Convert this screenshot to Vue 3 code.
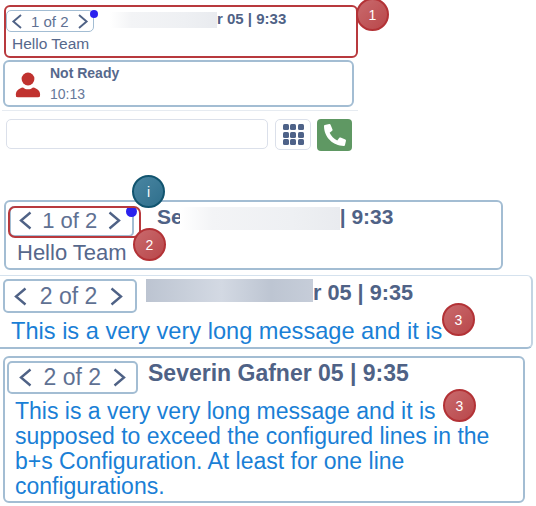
<script setup>
const longMessage = [
  'This is a very very long message and it is',
  'supposed to exceed the configured lines in the',
  'b+s Configuration. At least for one line',
  'configurations.'
]
const keys = 9
</script>

<template>
  <div class="page">
    <!-- small widget -->
    <section class="card small first">
      <div class="head">
        <div class="nav">
          <svg class="chev" viewBox="0 0 15 21"><path d="M12.500 2.500 3 10.500l9.500 8" /></svg>
          <span>1 of 2</span>
          <svg class="chev" viewBox="0 0 15 21"><path d="M2.500 2.500l9.500 8-9.500 8" /></svg>
          <i class="dot"></i>
        </div>
        <div class="title">
          <span class="blur pale"></span>
          <span>r 05 | 9:33</span>
        </div>
      </div>
      <p class="msg">Hello Team</p>
      <b class="badge red one">1</b>
    </section>

    <section class="card status">
      <svg class="person" viewBox="0 0 26 26">
        <circle cx="13" cy="7" r="6.400" />
        <path d="M1 24c-1-5 3-8 7-8.600 1.500 1.300 3 1.900 5 1.900s3.500-.6 5-1.900c4 .6 8 3.600 7 8.600-.2.8-.8 1.200-1.600 1.200H2.600C1.800 25.200 1.200 24.800 1 24z" />
      </svg>
      <div class="status-text">
        <strong>Not Ready</strong>
        <span>10:13</span>
      </div>
    </section>

    <div class="divider"></div>

    <div class="dial">
      <input class="number" />
      <button class="keypad">
        <span v-for="k in keys" :key="k"></span>
      </button>
      <button class="call">
        <svg viewBox="0 0 512 512">
          <path transform="matrix(-1 0 0 1 512 0)" d="M493.400 24.600l-104-24c-11.300-2.600-22.900 3.300-27.500 13.900l-48 112c-4.200 9.800-1.400 21.300 6.900 28l60.600 49.600c-36 76.700-98.900 140.500-177.200 177.200l-49.600-60.600c-6.800-8.300-18.200-11.100-28-6.900l-112 48C3.900 366.500-2 378.100.6 389.400l24 104C27.100 504.200 36.700 512 48 512c256.100 0 464-207.500 464-464 0-11.200-7.700-20.900-18.600-23.400z" />
        </svg>
      </button>
    </div>

    <!-- enlarged details -->
    <section class="card large third">
      <div class="head">
        <div class="nav">
          <svg class="chev" viewBox="0 0 15 21"><path d="M12.500 2.500 3 10.500l9.500 8" /></svg>
          <span>1 of 2</span>
          <svg class="chev" viewBox="0 0 15 21"><path d="M2.500 2.500l9.500 8-9.500 8" /></svg>
          <i class="dot"></i>
          <i class="mark"></i>
        </div>
        <div class="title">
          <span>Se</span>
          <span class="blur pale"></span>
          <span>| 9:33</span>
        </div>
      </div>
      <p class="msg">Hello Team</p>
      <b class="badge blue info">i</b>
      <b class="badge red two">2</b>
    </section>

    <section class="card large fourth">
      <div class="head">
        <div class="nav">
          <svg class="chev" viewBox="0 0 15 21"><path d="M12.500 2.500 3 10.500l9.500 8" /></svg>
          <span>2 of 2</span>
          <svg class="chev" viewBox="0 0 15 21"><path d="M2.500 2.500l9.500 8-9.500 8" /></svg>
        </div>
        <div class="title">
          <span class="blur dark"></span>
          <span>r 05 | 9:35</span>
        </div>
      </div>
      <p class="msg link">{{ longMessage[0] }}</p>
      <b class="badge red three-a">3</b>
    </section>

    <section class="card large fifth">
      <div class="head">
        <div class="nav">
          <svg class="chev" viewBox="0 0 15 21"><path d="M12.500 2.500 3 10.500l9.500 8" /></svg>
          <span>2 of 2</span>
          <svg class="chev" viewBox="0 0 15 21"><path d="M2.500 2.500l9.500 8-9.500 8" /></svg>
        </div>
        <div class="title">
          <span>Severin Gafner 05 | 9:35</span>
        </div>
      </div>
      <p class="msg link">
        <span v-for="line in longMessage" :key="line" class="line">{{ line }}</span>
      </p>
      <b class="badge red three-b">3</b>
    </section>
  </div>
</template>

<style scoped>
.page {
  width: 536px;
  height: 506px;
  overflow: hidden;
  font-family: "Liberation Sans", Arial, sans-serif;
  color: #56688c;
  background: #fff;
}

.page > :first-child {
  margin-top: 5px;
}

p {
  margin: 0;
}

.card {
  position: relative;
  box-sizing: border-box;
  border: 2px solid #a3bdd3;
  border-radius: 6px;
  background: #fff;
}

.head {
  display: flex;
  align-items: flex-start;
}

.nav {
  position: relative;
  box-sizing: border-box;
  display: flex;
  flex: none;
  align-items: center;
  justify-content: space-between;
  border: 2px solid #a3bdd3;
  border-radius: 5px;
  color: #5f7193;
}

.chev {
  flex: none;
  fill: none;
  stroke: #4f6286;
  stroke-width: 2.400;
}

.dot {
  position: absolute;
  border-radius: 50%;
  background: #2b22ee;
}

.title {
  display: flex;
  align-items: flex-start;
  font-weight: 700;
  white-space: nowrap;
  color: #4f6286;
}

.blur {
  display: block;
}

.blur.pale {
  background: linear-gradient(90deg, #fff 0, #f3f4f6 20%, #eef0f3 70%, #e9ebef 100%);
}

.blur.dark {
  background: linear-gradient(90deg, #bcc4d1, #d3d9e3 45%, #bdc5d2 75%, #c6cdd9);
}

/* small widget */
.small {
  margin-left: 4px;
}

.first {
  width: 354px;
  height: 53px;
  padding-top: 3px;
  border-color: #b8393d;
}

.first .nav {
  width: 88px;
  height: 22px;
  padding: 0 4.500px 0 4px;
  border-width: 1.500px;
  font-size: 15px;
}

.first .chev {
  width: 12px;
  height: 17px;
}

.first .dot {
  top: -1.500px;
  right: -4.500px;
  width: 8px;
  height: 8px;
}

.first .title {
  margin-left: 16px;
  font-size: 15px;
  line-height: 17px;
}

.first .blur {
  width: 107px;
  height: 16px;
  margin-top: 2px;
}

.first .msg {
  margin: 3px 0 0 6px;
  font-size: 15.500px;
  line-height: 18px;
}

.status {
  display: flex;
  width: 351px;
  height: 47px;
  margin: 2px 0 0 3px;
  padding: 3px 0 0 10px;
  font-size: 14px;
}

.person {
  width: 26px;
  height: 26px;
  margin-top: 7px;
  fill: #c0322f;
}

.status-text {
  display: flex;
  flex-direction: column;
  gap: 5px;
  margin-left: 9px;
}

.status-text span {
  color: #66789a;
}

.divider {
  width: 356px;
  height: 1px;
  margin: 3px 0 0 2px;
  background: #e6ebf1;
}

.dial {
  display: flex;
  align-items: flex-start;
  margin: 8px 0 0 6px;
}

.number {
  box-sizing: border-box;
  width: 262px;
  height: 30px;
  padding: 0;
  border: 1.500px solid #dbe0ea;
  border-radius: 5px;
  background: #fff;
}

.keypad {
  box-sizing: border-box;
  display: grid;
  grid-template-columns: repeat(3, 6px);
  grid-auto-rows: 6px;
  gap: 1.500px;
  place-content: center;
  width: 36px;
  height: 31px;
  margin-left: 7px;
  padding: 0;
  border: 1.500px solid #dbe0ea;
  border-radius: 5px;
  background: #fff;
}

.keypad span {
  border-radius: 1.500px;
  background: #4e6288;
}

.call {
  display: flex;
  align-items: center;
  justify-content: center;
  width: 35px;
  height: 32px;
  margin-left: 6px;
  padding: 0;
  border: 0;
  border-radius: 4px;
  background: #5f9863;
}

.call svg {
  width: 22px;
  height: 22px;
  fill: #fff;
}

/* enlarged */
.large .chev {
  width: 15px;
  height: 21px;
}

.large .msg {
  line-height: 25px;
}

.link {
  color: #1a7fd6;
}

.line {
  display: block;
}

.third {
  width: 499px;
  height: 70px;
  margin: 49px 0 0 4px;
  padding: 4px 0 0 3px;
}

.third .nav {
  width: 125px;
  height: 31px;
  padding: 0 10px 2px 6.500px;
  font-size: 22px;
}

.third .dot {
  top: -2px;
  right: -5px;
  width: 11px;
  height: 11px;
}

.mark {
  position: absolute;
  top: -2px;
  left: -3px;
  box-sizing: border-box;
  width: 133px;
  height: 32px;
  border: 2px solid #b8393d;
  border-radius: 7px;
}

.third .title {
  margin-left: 23px;
  font-size: 21px;
  line-height: 22px;
}

.third .blur {
  width: 160px;
  height: 23px;
  margin: 1px 0 0 -3px;
}

.third .msg {
  margin: 3px 0 0 8px;
  font-size: 22px;
}

.fourth {
  width: 533px;
  height: 74px;
  margin: 5px 0 0 0;
  padding: 3px 0 0 3px;
  border-width: 1px 2px 2px 0;
  border-top-color: #d5e2ee;
  border-right-color: #c3d4e3;
  border-radius: 0 6px 6px 0;
}

.fourth .nav {
  width: 134px;
  height: 34px;
  padding: 0 11px 0 8px;
  font-size: 23px;
}

.fourth .title {
  margin-left: 9px;
  font-size: 21.700px;
  line-height: 27px;
}

.fourth .blur {
  width: 167px;
  height: 23px;
}

.fourth .msg {
  margin: 6px 0 0 8px;
  font-size: 23.600px;
  white-space: nowrap;
}

.fifth {
  width: 522px;
  height: 147px;
  margin: 7px 0 0 3px;
  padding: 3px 0 0 2px;
}

.fifth .nav {
  width: 131px;
  height: 33px;
  padding: 0 9px 0 8.500px;
  font-size: 23px;
}

.fifth .title {
  margin-left: 10px;
  font-size: 23px;
  line-height: 24px;
}

.fifth .msg {
  margin: 5px 0 0 8px;
  font-size: 23px;
}

/* annotation badges */
.badge {
  position: absolute;
  display: flex;
  align-items: center;
  justify-content: center;
  box-sizing: border-box;
  width: 33px;
  height: 33px;
  border-radius: 50%;
  font-size: 14px;
  font-weight: 400;
  color: #fff;
}

.red {
  border: 2px solid #b33236;
  background: linear-gradient(135deg, #c96a6d, #b9474a);
}

.blue {
  border: 2px solid #11546f;
  background: linear-gradient(135deg, #4a86a2, #2f6f8c);
}

.one {
  top: -9px;
  left: 350px;
}

.info {
  top: -27px;
  left: 126px;
}

.two {
  top: 26px;
  left: 127px;
}

.three-a {
  top: 27px;
  left: 442px;
}

.three-b {
  top: 31px;
  left: 438px;
}
</style>
